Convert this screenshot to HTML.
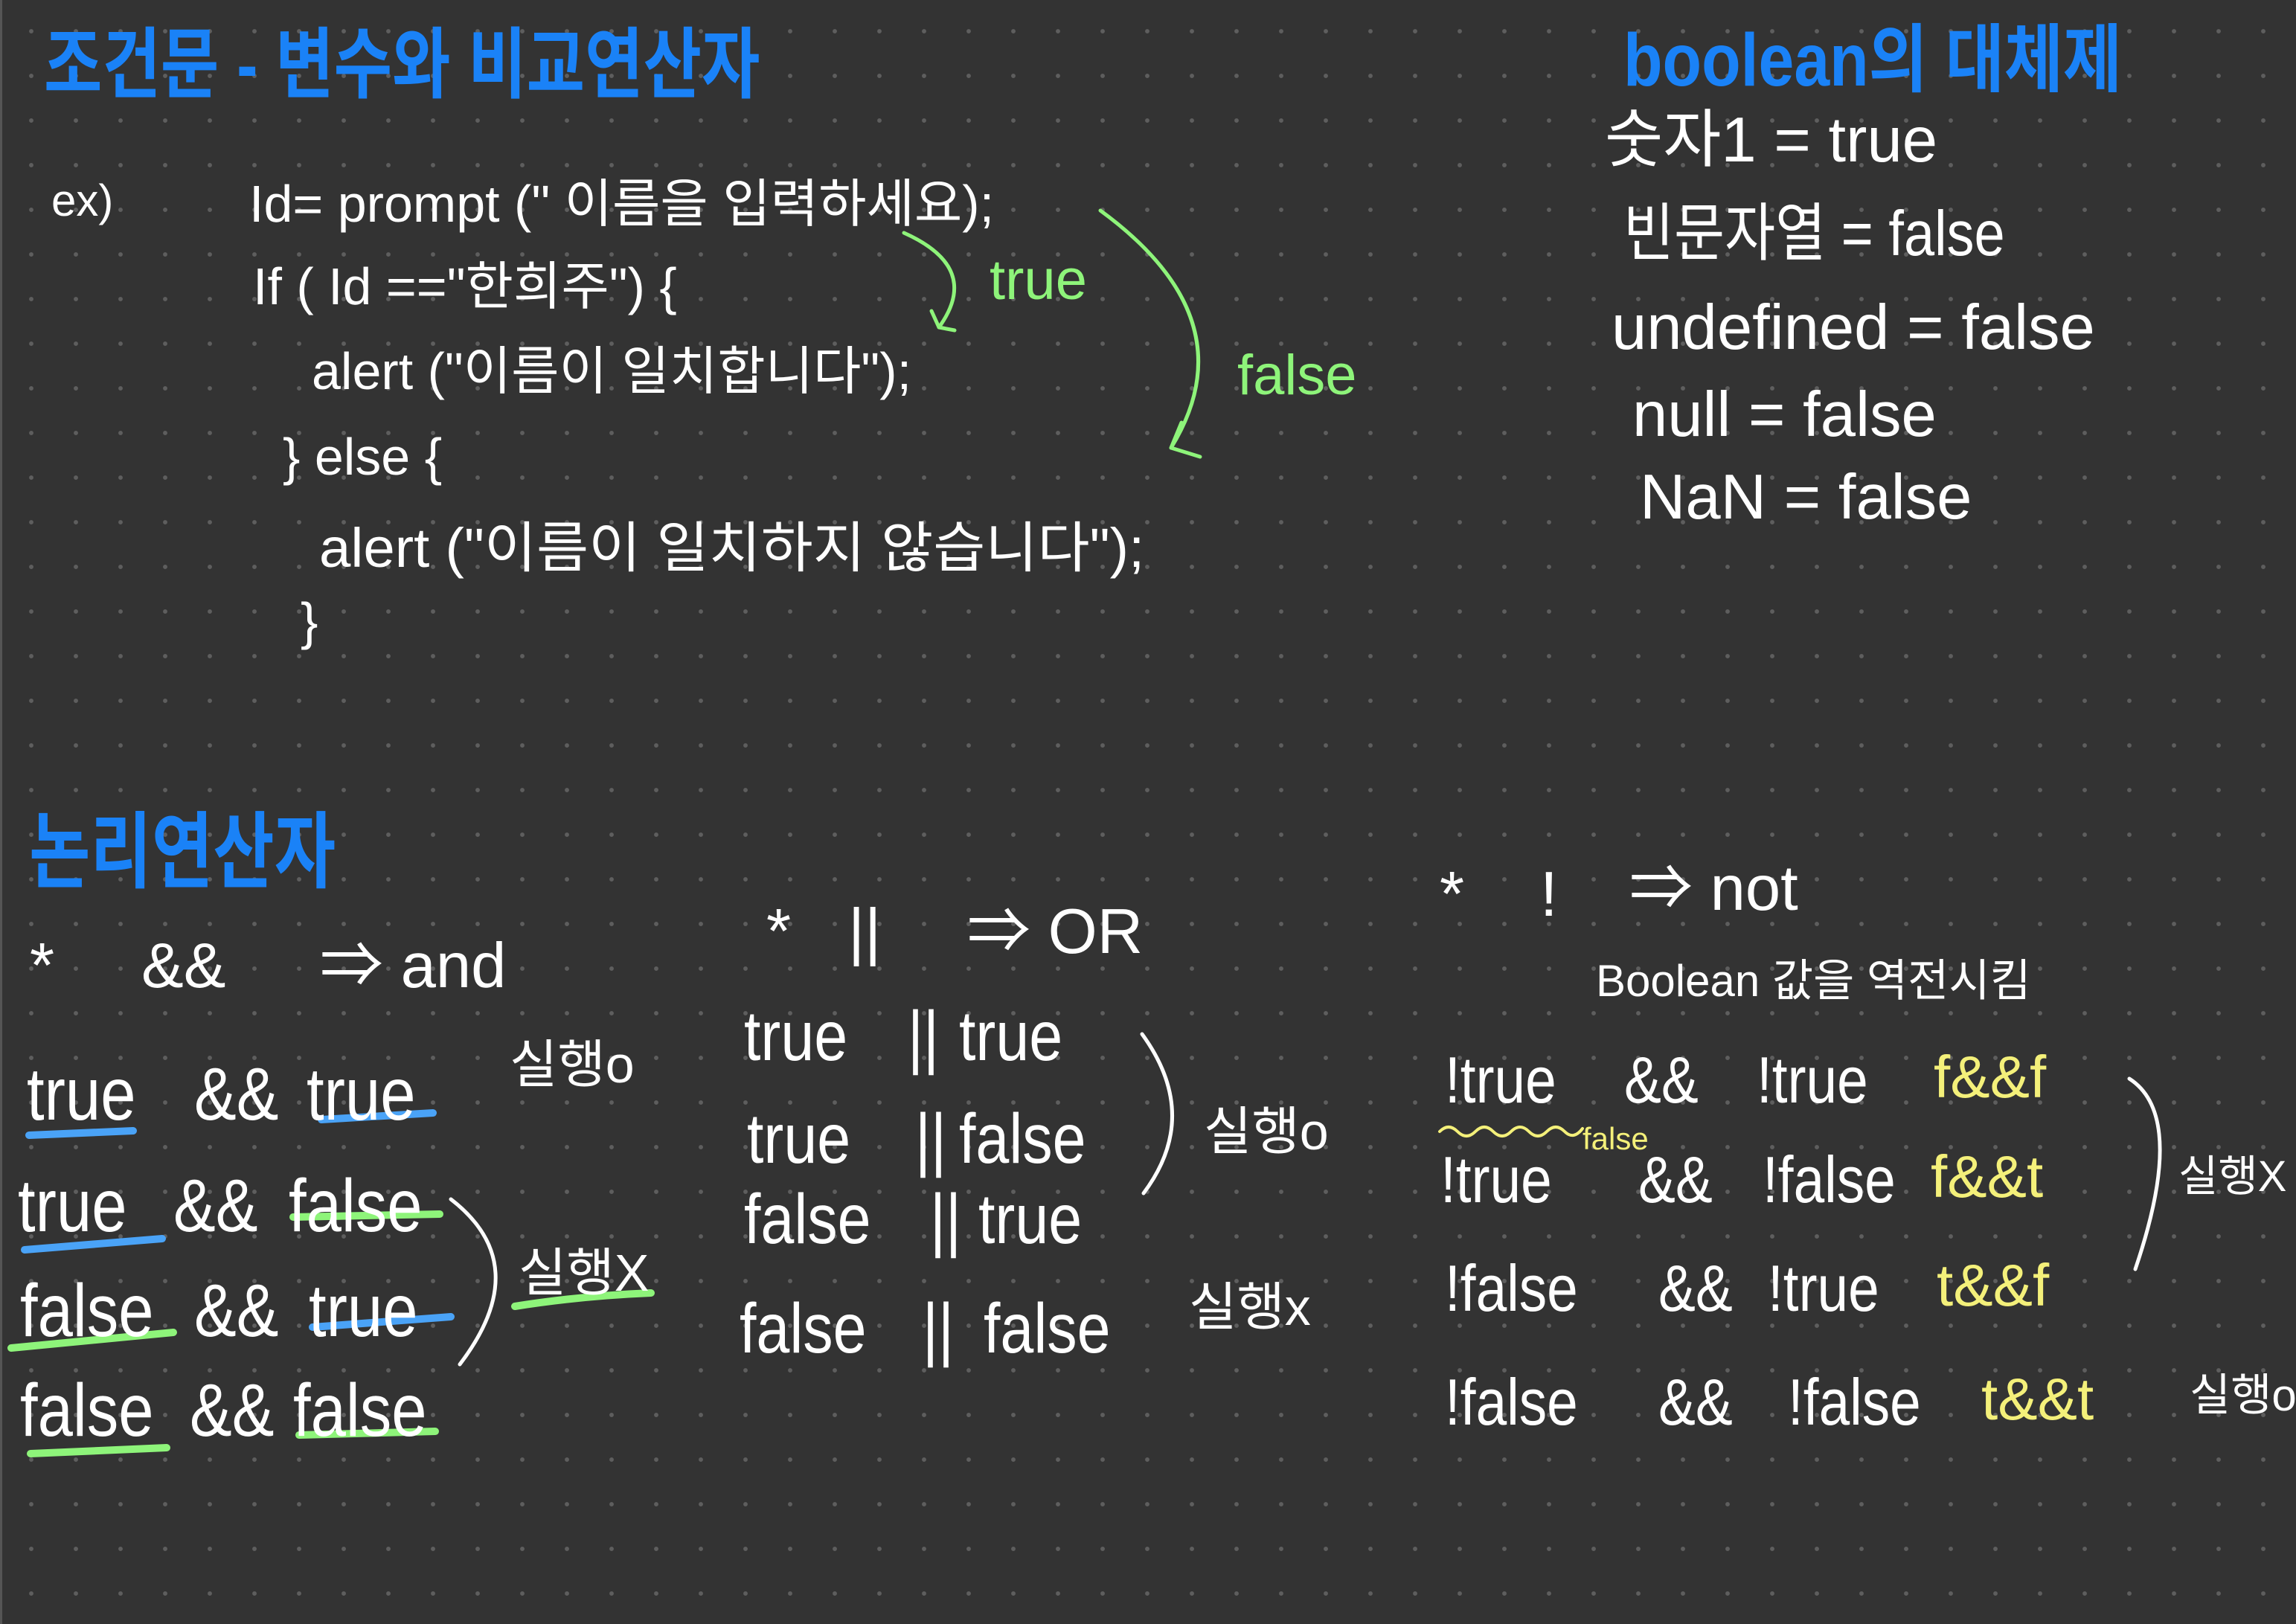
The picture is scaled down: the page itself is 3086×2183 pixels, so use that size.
<!DOCTYPE html>
<html><head><meta charset="utf-8">
<style>
html,body{margin:0;padding:0}
body{width:3086px;height:2183px;position:relative;overflow:hidden;background-color:#333333;
background-image:radial-gradient(circle,#5e5e5e 2.6px,transparent 3.2px);background-size:60px 60px;background-position:12px 12px;
font-family:"Liberation Sans Narrow","Liberation Sans","Noto Sans CJK KR",sans-serif;}
.b{position:absolute;left:0;top:0;width:3px;height:2183px;background:#555}
.t{position:absolute;white-space:nowrap;line-height:1;color:#fff;transform-origin:0 0;}
.n{transform:scaleX(.85)}
.bl{color:#1a82f7;font-weight:bold}
.g{color:#8ef47a}
.y{color:#f4f07a}
svg{position:absolute;left:0;top:0}
</style></head><body>
<div class="b"></div>
<svg width="3086" height="2183" fill="none" stroke-linecap="round" stroke-linejoin="round">
<path d="M1215 313 Q1320 360 1262 440" stroke="#8ef47a" stroke-width="5"/>
<path d="M1262 440 L1252 418 M1262 440 L1283 444" stroke="#8ef47a" stroke-width="5"/>
<path d="M1479 283 Q1680 430 1574 602" stroke="#8ef47a" stroke-width="5"/>
<path d="M1574 602 L1588 568 M1574 602 L1613 614" stroke="#8ef47a" stroke-width="5"/>
<g stroke-width="10">
<path d="M39 1526 L179 1520" stroke="#4aa3f7"/>
<path d="M432 1505 L582 1496" stroke="#4aa3f7"/>
<path d="M33 1680 L218 1665" stroke="#4aa3f7"/>
<path d="M394 1636 L591 1632" stroke="#8ef47a"/>
<path d="M15 1812 L233 1791" stroke="#8ef47a"/>
<path d="M420 1784 L606 1770" stroke="#4aa3f7"/>
<path d="M41 1954 L224 1946" stroke="#8ef47a"/>
<path d="M402 1929 L585 1924" stroke="#8ef47a"/>
<path d="M692 1756 Q780 1742 875 1738" stroke="#8ef47a"/>
</g>
<path d="M606 1612 Q720 1700 618 1834" stroke="#fff" stroke-width="5"/>
<path d="M1535 1390 Q1615 1500 1537 1604" stroke="#fff" stroke-width="5"/>
<path d="M2862 1450 Q2940 1500 2870 1706" stroke="#fff" stroke-width="5"/>
<path d="M1935 1521 q12 -12 24 0 t24 0 t24 0 t24 0 t24 0 t24 0 t24 0 t24 -4" stroke="#f4f07a" stroke-width="4"/>
</svg>

<div class="t bl" style="left:59px;top:36px;font-size:104px;transform:scaleX(.82)">조건문 - 변수와 비교연산자</div>
<div class="t" style="left:69px;top:240px;font-size:60px">ex)</div>
<div class="t" style="left:335px;top:239px;font-size:70px">Id= prompt (" 이름을 입력하세요);</div>
<div class="t" style="left:340px;top:350px;font-size:70px">If ( Id =="한희주") {</div>
<div class="t" style="left:419px;top:464px;font-size:70px">alert ("이름이 일치합니다");</div>
<div class="t" style="left:380px;top:579px;font-size:70px">} else {</div>
<div class="t" style="left:429px;top:700px;font-size:74px;transform:scaleX(1.03)">alert ("이름이 일치하지 않습니다");</div>
<div class="t" style="left:404px;top:800px;font-size:70px">}</div>
<div class="t g" style="left:1330px;top:339px;font-size:76px">true</div>
<div class="t g" style="left:1663px;top:467px;font-size:76px">false</div>

<div class="t bl" style="left:2182px;top:31px;font-size:100px;transform:scaleX(.86)">boolean의 대체제</div>
<div class="t" style="left:2157px;top:146px;font-size:85px">숫자1 = true</div>
<div class="t" style="left:2182px;top:272px;font-size:85px;transform:scaleX(.87)">빈문자열 = false</div>
<div class="t" style="left:2166px;top:398px;font-size:85px">undefined = false</div>
<div class="t" style="left:2194px;top:515px;font-size:85px">null = false</div>
<div class="t" style="left:2204px;top:626px;font-size:85px">NaN = false</div>

<div class="t bl" style="left:39px;top:1090px;font-size:112px;transform:scaleX(.8)">논리연산자</div>
<div class="t" style="left:40px;top:1256px;font-size:85px">*</div>
<div class="t" style="left:190px;top:1256px;font-size:85px">&amp;&amp;</div>
<div class="t" style="left:430px;top:1256px;font-size:85px">⇒ and</div>

<div class="t n" style="left:36px;top:1421px;font-size:100px">true</div>
<div class="t n" style="left:261px;top:1421px;font-size:100px">&amp;&amp;</div>
<div class="t n" style="left:412px;top:1421px;font-size:100px">true</div>
<div class="t" style="left:685px;top:1396px;font-size:70px">실행o</div>
<div class="t n" style="left:24px;top:1571px;font-size:100px">true</div>
<div class="t n" style="left:233px;top:1571px;font-size:100px">&amp;&amp;</div>
<div class="t n" style="left:388px;top:1571px;font-size:100px">false</div>
<div class="t n" style="left:27px;top:1712px;font-size:100px">false</div>
<div class="t n" style="left:261px;top:1712px;font-size:100px">&amp;&amp;</div>
<div class="t n" style="left:415px;top:1712px;font-size:100px">true</div>
<div class="t n" style="left:27px;top:1846px;font-size:100px">false</div>
<div class="t n" style="left:255px;top:1846px;font-size:100px">&amp;&amp;</div>
<div class="t n" style="left:394px;top:1846px;font-size:100px">false</div>
<div class="t" style="left:697px;top:1676px;font-size:70px">실행X</div>

<div class="t" style="left:1030px;top:1210px;font-size:85px">*</div>
<div class="t" style="left:1140px;top:1210px;font-size:85px">||</div>
<div class="t" style="left:1300px;top:1210px;font-size:85px">⇒ OR</div>
<div class="t n" style="left:1000px;top:1346px;font-size:95px">true</div>
<div class="t n" style="left:1220px;top:1346px;font-size:95px">||</div>
<div class="t n" style="left:1289px;top:1346px;font-size:95px">true</div>
<div class="t n" style="left:1004px;top:1484px;font-size:95px">true</div>
<div class="t n" style="left:1230px;top:1484px;font-size:95px">||</div>
<div class="t n" style="left:1289px;top:1484px;font-size:95px">false</div>
<div class="t n" style="left:1000px;top:1592px;font-size:95px">false</div>
<div class="t n" style="left:1250px;top:1592px;font-size:95px">||</div>
<div class="t n" style="left:1315px;top:1592px;font-size:95px">true</div>
<div class="t n" style="left:994px;top:1739px;font-size:95px">false</div>
<div class="t n" style="left:1240px;top:1739px;font-size:95px">||</div>
<div class="t n" style="left:1322px;top:1739px;font-size:95px">false</div>
<div class="t" style="left:1618px;top:1486px;font-size:70px">실행o</div>
<div class="t" style="left:1598px;top:1722px;font-size:70px">실행x</div>

<div class="t" style="left:1935px;top:1160px;font-size:85px">*</div>
<div class="t" style="left:2070px;top:1160px;font-size:85px">!</div>
<div class="t" style="left:2190px;top:1152px;font-size:85px">⇒ not</div>
<div class="t" style="left:2145px;top:1289px;font-size:60px">Boolean 값을 역전시킴</div>

<div class="t n" style="left:1942px;top:1408px;font-size:88px">!true</div>
<div class="t n" style="left:2183px;top:1408px;font-size:88px">&amp;&amp;</div>
<div class="t n" style="left:2361px;top:1408px;font-size:88px">!true</div>
<div class="t y" style="left:2599px;top:1408px;font-size:80px">f&amp;&amp;f</div>
<div class="t y" style="left:2127px;top:1510px;font-size:42px">false</div>
<div class="t n" style="left:1936px;top:1542px;font-size:88px">!true</div>
<div class="t n" style="left:2202px;top:1542px;font-size:88px">&amp;&amp;</div>
<div class="t n" style="left:2369px;top:1542px;font-size:88px">!false</div>
<div class="t y" style="left:2595px;top:1542px;font-size:80px">f&amp;&amp;t</div>
<div class="t n" style="left:1942px;top:1688px;font-size:88px">!false</div>
<div class="t n" style="left:2229px;top:1688px;font-size:88px">&amp;&amp;</div>
<div class="t n" style="left:2376px;top:1688px;font-size:88px">!true</div>
<div class="t y" style="left:2603px;top:1688px;font-size:80px">t&amp;&amp;f</div>
<div class="t n" style="left:1942px;top:1841px;font-size:88px">!false</div>
<div class="t n" style="left:2229px;top:1841px;font-size:88px">&amp;&amp;</div>
<div class="t n" style="left:2403px;top:1841px;font-size:88px">!false</div>
<div class="t y" style="left:2663px;top:1841px;font-size:80px">t&amp;&amp;t</div>
<div class="t" style="left:2928px;top:1553px;font-size:58px">실행X</div>
<div class="t" style="left:2943px;top:1846px;font-size:60px">실행o</div>
</body></html>
